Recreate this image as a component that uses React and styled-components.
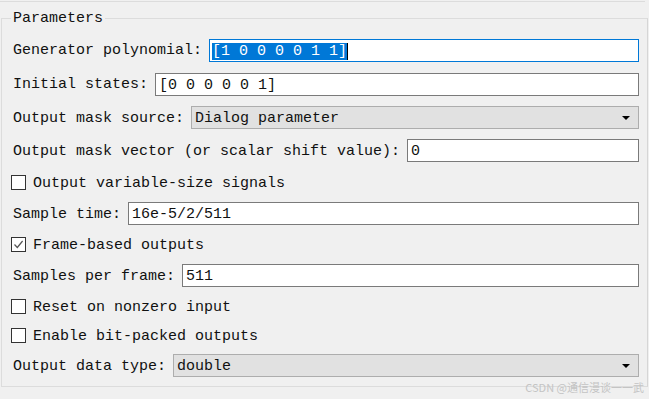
import React from 'react';
import styled, { createGlobalStyle } from 'styled-components';

const Global = createGlobalStyle`
  html, body {
    margin: 0;
    padding: 0;
    background: #f0f0f0;
  }
`;

const Page = styled.div`
  position: relative;
  width: 649px;
  height: 399px;
  overflow: hidden;
  background: #f0f0f0;
  font-family: "Liberation Mono", "DejaVu Sans Mono", monospace;
  font-size: 15px;
  color: #111;
  padding-top: 1px;
  box-sizing: border-box;
`;

const TopLine = styled.div`
  width: 645px;
  height: 16px;
  border-top: 1px solid #dcdcdc;
`;

const Group = styled.div`
  margin-left: 1px;
  width: 647px;
  height: 369px;
  box-sizing: border-box;
  border: 1px solid #dcdcdc;
  border-right-color: #d6d6d6;
`;

const Legend = styled.div`
  margin: -9px 0 0 9px;
  width: fit-content;
  height: 18px;
  line-height: 18px;
  padding: 0 2px;
  background: #f0f0f0;
`;

const Rows = styled.div`
  display: flex;
  flex-direction: column;
  padding: 5px 8px 0 0;
`;

const Row = styled.div`
  display: flex;
  align-items: center;
  height: ${(p) => p.h}px;
  padding-left: ${(p) => (p.check ? 9 : 11)}px;
  white-space: pre;
`;

const Label = styled.span`
  margin-right: 7px;
  line-height: 18px;
  padding-top: 2px;
`;

const Field = styled.div`
  flex: 1;
  height: 23px;
  box-sizing: border-box;
  border: 1px solid ${(p) => (p.focused ? '#0078d7' : '#7a7a7a')};
  background: #fff;
  display: flex;
  align-items: center;
  padding: 2px 0 0 ${(p) => (p.focused ? 2 : 3)}px;
  line-height: 17px;
`;

const Selected = styled.span`
  background: #0078d7;
  color: #fff;
  height: 17px;
`;

const Caret = styled.span`
  width: 1px;
  height: 17px;
  background: #000;
`;

const Select = styled.div`
  flex: 1;
  height: 23px;
  box-sizing: border-box;
  border: 1px solid #adadad;
  background: #e1e1e1;
  display: flex;
  align-items: center;
  justify-content: space-between;
  padding: 2px 8px 0 3px;
`;

const Arrow = styled.span`
  width: 0;
  height: 0;
  margin-top: -2px;
  border-left: 4px solid transparent;
  border-right: 4px solid transparent;
  border-top: 4px solid #000;
`;

const Box = styled.span`
  width: 15px;
  height: 15px;
  box-sizing: border-box;
  border: 1px solid #333;
  background: #fff;
  margin-right: 7px;
  display: flex;
  align-items: center;
  justify-content: center;
`;

const CheckText = styled.span`
  padding-top: 2px;
`;

const Watermark = styled.div`
  position: absolute;
  right: 5px;
  bottom: 5px;
  font-family: "Noto Sans CJK SC", "Liberation Sans", sans-serif;
  font-size: 11px;
  line-height: 14px;
  color: #c4c4c4;
`;

const Check = ({ checked, children, h }) => (
  <Row h={h} check>
    <Box>
      {checked && (
        <svg width="11" height="11" viewBox="0 0 11 11">
          <path d="M1.5 5.5 L4.3 8.5 L9.6 2" fill="none" stroke="#555" strokeWidth="1.2" />
        </svg>
      )}
    </Box>
    <CheckText>{children}</CheckText>
  </Row>
);

export default function App() {
  return (
    <Page>
      <Global />
      <TopLine />
      <Group>
        <Legend>Parameters</Legend>
        <Rows>
          <Row h={34}>
            <Label>Generator polynomial:</Label>
            <Field focused>
              <Selected>[1 0 0 0 0 1 1]</Selected>
              <Caret />
            </Field>
          </Row>
          <Row h={34}>
            <Label>Initial states:</Label>
            <Field>[0 0 0 0 0 1]</Field>
          </Row>
          <Row h={33}>
            <Label>Output mask source:</Label>
            <Select>
              <span>Dialog parameter</span>
              <Arrow />
            </Select>
          </Row>
          <Row h={33}>
            <Label>Output mask vector (or scalar shift value):</Label>
            <Field>0</Field>
          </Row>
          <Check h={31}>Output variable-size signals</Check>
          <Row h={31}>
            <Label>Sample time:</Label>
            <Field>16e-5/2/511</Field>
          </Row>
          <Check h={31} checked>Frame-based outputs</Check>
          <Row h={31}>
            <Label>Samples per frame:</Label>
            <Field>511</Field>
          </Row>
          <Check h={30}>Reset on nonzero input</Check>
          <Check h={29}>Enable bit-packed outputs</Check>
          <Row h={31}>
            <Label>Output data type:</Label>
            <Select>
              <span>double</span>
              <Arrow />
            </Select>
          </Row>
        </Rows>
      </Group>
      <Watermark>CSDN @通信漫谈一一武</Watermark>
    </Page>
  );
}
